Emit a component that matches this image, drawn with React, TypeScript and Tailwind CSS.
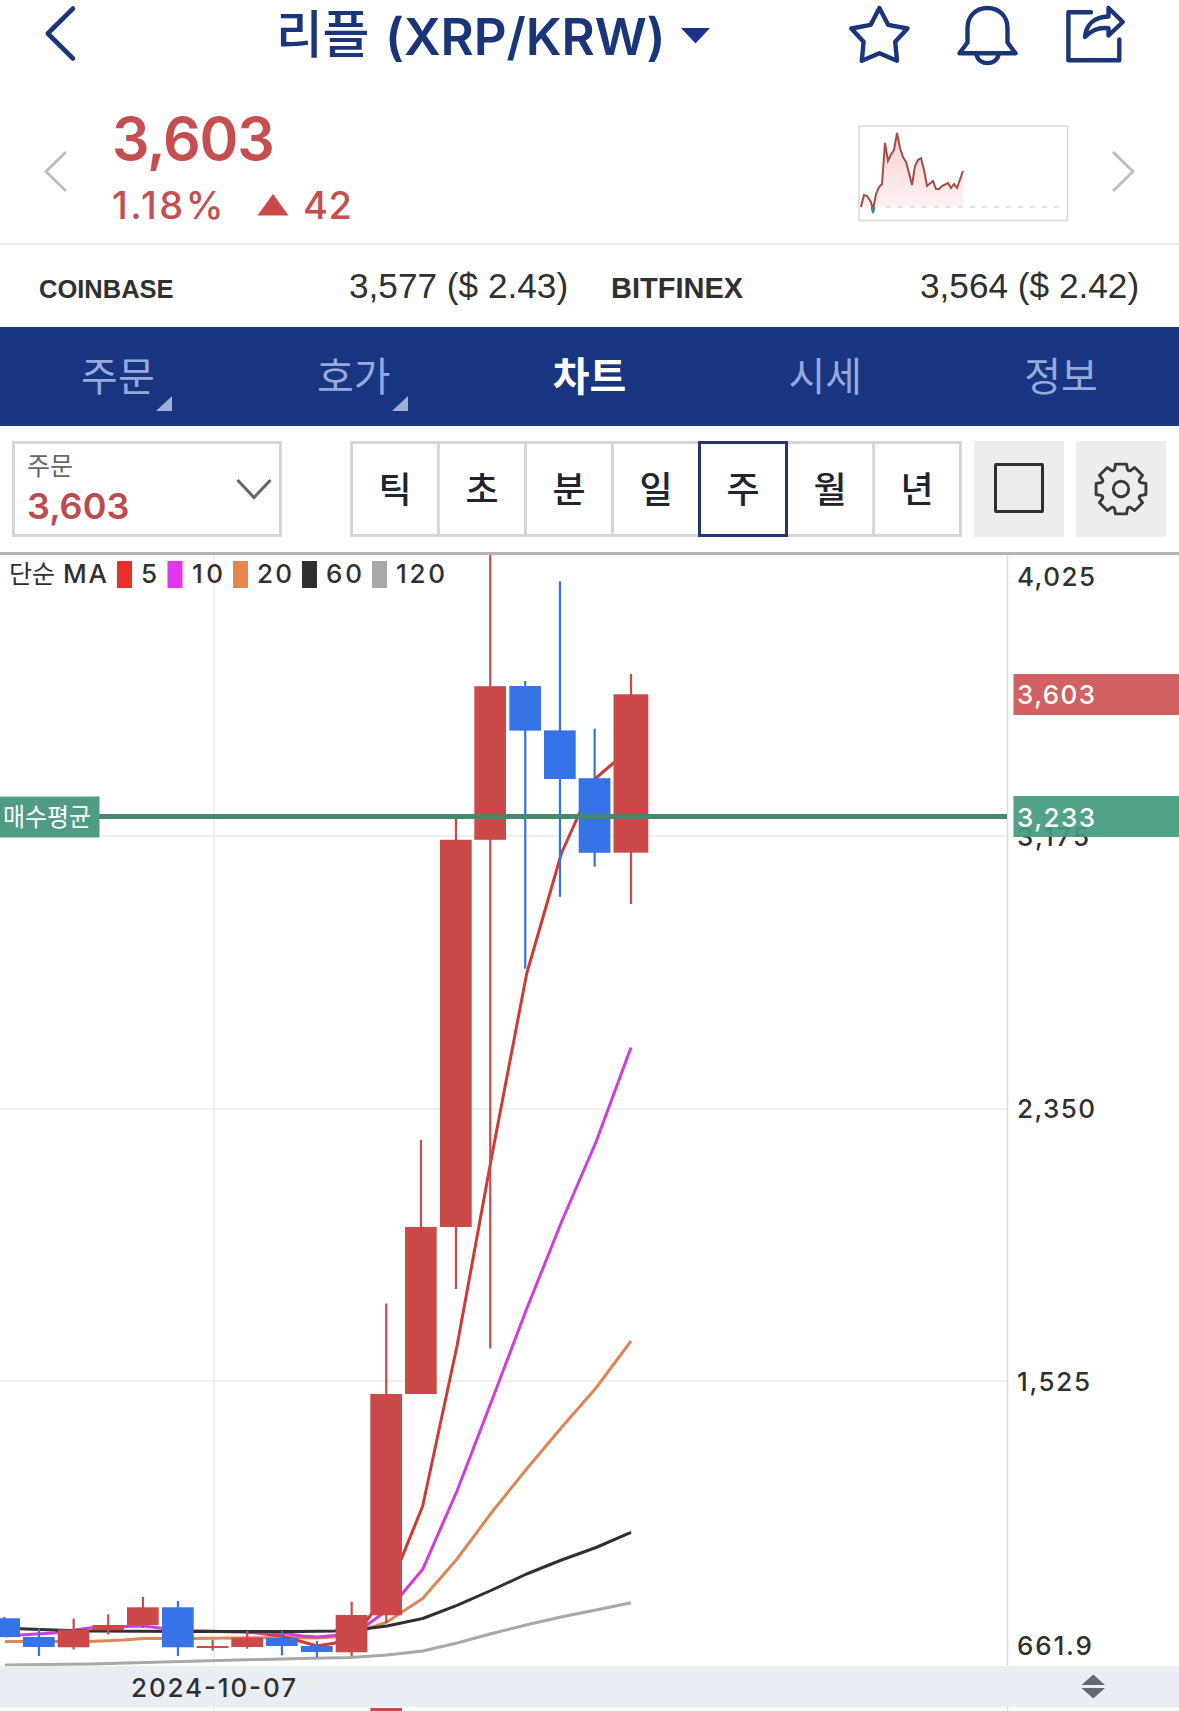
import React from "react";

type Candle = { x: number; w?: number; top: number; bottom: number; high: number; low: number; up: boolean };

const RED = "#cb4a49";
const BLUE = "#3573e6";

// Weekly candles, oldest first; x is the body's left edge.
const candles: Candle[] = [
  { x: -11.7, top: 1618.3, bottom: 1637, high: 1617, low: 1637, up: false },
  { x: 23, top: 1637, bottom: 1647, high: 1628.5, low: 1656, up: false },
  { x: 57.7, top: 1629.5, bottom: 1647.3, high: 1618.5, low: 1649.5, up: true },
  { x: 92.3, top: 1625, bottom: 1630.3, high: 1614.3, low: 1634.5, up: true },
  { x: 127, top: 1607.3, bottom: 1625, high: 1597, low: 1628, up: true },
  { x: 162, top: 1607.3, bottom: 1647.3, high: 1601, low: 1656, up: false },
  { x: 196.7, top: 1646, bottom: 1648, high: 1640, low: 1650.5, up: true },
  { x: 231.3, top: 1637.7, bottom: 1647, high: 1631, low: 1648.7, up: true },
  { x: 266, top: 1638, bottom: 1646, high: 1631, low: 1655.3, up: false },
  { x: 301, top: 1646, bottom: 1652, high: 1641, low: 1657.5, up: false },
  { x: 335.7, top: 1615, bottom: 1652.3, high: 1601.7, low: 1656, up: true },
  { x: 370.3, top: 1394, bottom: 1615.3, high: 1303.5, low: 1623, up: true },
  { x: 405, top: 1227, bottom: 1394, high: 1140, low: 1394, up: true },
  { x: 440, top: 839.8, bottom: 1227, high: 818, low: 1289, up: true },
  { x: 474.3, top: 686.2, bottom: 839.8, high: 555, low: 1348.5, up: true },
  { x: 509.3, top: 686, bottom: 730.6, high: 681, low: 968.7, up: false },
  { x: 544, top: 730.4, bottom: 779, high: 581.3, low: 896.8, up: false },
  { x: 578.7, top: 778.2, bottom: 852.8, high: 728.7, low: 866.7, up: false },
  { x: 613.5, w: 34.8, top: 694.3, bottom: 852.7, high: 674, low: 904, up: true },
];

const averages = [
  { color: "#a8a8a8", points: "5,1665 90,1664 200,1661 300,1658.5 350,1657.5 387,1655 422.7,1651 457,1643 492,1633.5 526,1625 561,1617 596,1610 631,1602.8" },
  { color: "#dd8656", points: "5,1641.5 89,1641.5 124,1640 143,1638.5 193,1638.5 282,1637.5 317,1638 334,1637 367,1629 387,1622 402,1612 422.7,1598.5 457,1559 492,1512 526.6,1469 561.5,1427.5 596,1388 631,1341" },
  { color: "#cc3b35", points: "193,1631 247,1632 282,1636 317,1646 335,1643 353,1637 367,1620 387.5,1593 401.7,1558 422.7,1506 457,1346 492,1155 526.6,974 561.5,853 580,812 596,778 614,762.5 631,748" },
  { color: "#cf3ddb", points: "5,1636 20,1635 54,1633 89,1628 124,1626.5 143,1626 160,1628 193,1631 250,1632 282,1633 302,1636 317,1637 353,1634 367,1625 387.5,1610 402,1594 422.7,1569.3 457,1491 492,1400 526.6,1309 561.5,1222 596,1142 631,1047.5" },
  { color: "#303030", points: "5,1628 20,1628.7 54,1630 89,1631 193,1631.5 300,1631.5 335,1631 367,1628.5 387,1626 422.7,1618.5 457,1605.3 492,1590 526.6,1574 561.5,1560 596,1547.5 631,1532.3" },
];

const legend = [
  { x: 117, color: "#e92f27", label: "5", tx: 141, len: 15.5 },
  { x: 167.5, color: "#e336ec", label: "10", tx: 192, len: 31 },
  { x: 233, color: "#e7864f", label: "20", tx: 257, len: 35 },
  { x: 302, color: "#303030", label: "60", tx: 326, len: 36 },
  { x: 372, color: "#a8a8a8", label: "120", tx: 396, len: 49 },
];

const FONT = "Inter, 'Noto Sans CJK KR', sans-serif";

function gearPath() {
  const p = (deg: number, r: number) => {
    const a = (deg * Math.PI) / 180;
    return `${(27 + r * Math.sin(a)).toFixed(2)} ${(27 - r * Math.cos(a)).toFixed(2)}`;
  };
  let d = "";
  for (let k = 0; k < 8; k++) {
    const a = k * 45;
    d += `${k ? "L" : "M"}${p(a - 12.5, 25.5)} L${p(a + 12.5, 25.5)} L${p(a + 17.5, 21)} Q${p(a + 22.5, 18.8)} ${p(a + 27.5, 21)} `;
  }
  return d + "Z";
}

function Header() {
  return (
    <header className="flex h-[72px] items-start text-[#1a3678]">
      <svg className="ml-[40px] mt-[2px] h-16 w-10" viewBox="40 2 40 64" fill="none" stroke="currentColor" strokeWidth="4.6" strokeLinecap="round" strokeLinejoin="round">
        <path d="M73 8.5 47.8 33.5 73 58.5" />
      </svg>
      <h1 className="ml-[196px] mt-[3px] flex h-[66px] items-center whitespace-nowrap font-[Inter,'Noto_Sans_CJK_KR',sans-serif] text-[51px] font-semibold leading-none">
        <span className="-mt-[3px] w-[109px] text-[51px] font-medium tracking-[-0.5px]">리플</span>
        <span className="w-[283px] tracking-[-0.1px]">(XRP/KRW)</span>
      </h1>
      <svg className="ml-[13px] mt-[28px] h-[16px] w-[30px]" viewBox="0 0 30 16"><path d="M0 0h29L14.5 15.5z" fill="#19348a" /></svg>
      <svg className="ml-[129px] h-[70px] w-[300px]" viewBox="840 0 300 70" fill="none" stroke="currentColor" strokeWidth="4.4" strokeLinejoin="round" strokeLinecap="round">
        <path d="M879.4 8 888.1 24.8 907.5 28.5 895.2 41.7 897 60.8 879.4 53.3 861.8 60.8 863.6 41.7 851.3 28.5 870.7 24.8Z" />
        <path d="M959.5 53.3 967.5 42.5V28C967.5 16 976 8 987.4 8S1007.5 16 1007.5 28V42.5L1015.5 53.3Z" />
        <path d="M976.5 54.5C978.5 66 996.5 66 998.5 54.5" />
        <path d="M1091 12.3H1068.4V60.3H1119.3V39.5" />
        <path d="M1085 37C1086 25 1094 17 1108.5 16.5V8L1122.8 22 1108.5 35.5V28.3C1097 27 1091 31 1085 37Z" />
      </svg>
    </header>
  );
}

function PriceSummary() {
  return (
    <section className="flex h-[173px] border-b-2 border-[#e6e6e6] font-[Inter,sans-serif] text-[#c44e50]">
      <svg className="ml-[42px] mt-[78px] h-[44px] w-[28px]" viewBox="42 150 28 44" fill="none" stroke="#bdbdbd" strokeWidth="2.8"><path d="M66 152 46 171.500 66 191" /></svg>
      <div className="ml-[42px] w-[300px]">
        <div className="mt-[37px] h-[60px] text-[59px] font-semibold leading-[60px] tracking-[-1.2px]">3,603</div>
        <div className="mt-[17px] flex h-[38px] items-center whitespace-nowrap text-[38px] leading-[38px]">
          <span className="w-[145px] font-medium tracking-[2.5px]">1.18%</span>
          <svg className="h-[22px] w-[32px]" viewBox="0 0 32 22"><path d="M16 0 31.500 21.500H.5z" fill="#cb4a49" /></svg>
          <span className="ml-[14px] font-medium tracking-[0.5px]">42</span>
        </div>
      </div>
      <svg className="ml-[446px] mt-[53px] h-[97px] w-[211px]" viewBox="858 125 211 97" fill="none">
        <defs>
          <linearGradient id="fade" x1="0" y1="0" x2="0" y2="1">
            <stop offset="0" stopColor="#f9cfd2" />
            <stop offset="1" stopColor="#fff4f4" />
          </linearGradient>
        </defs>
        <rect x="859" y="126" width="208.500" height="94.500" stroke="#dcdcdc" strokeWidth="1.6" />
        <path d="M861 207 864 195 867 196 871 202 873 210 876 194 879 187 882 184 885 143 888 161 891 154.500 894 150 897 133 900 148 903 157 906 162 909 173 912 185 915 166 918 160 921 158 924 170 927 186 933 181 936 189 939 189 942 186 948 183 951 188 954 184 957 188 963 171V207Z" fill="url(#fade)" />
        <path d="M886 207H1060" stroke="#d6d6d6" strokeWidth="1.600" strokeDasharray="5 7" />
        <path d="M861 207 864 195 867 196 871 202 873 210 876 194 879 187 882 184 885 143 888 161 891 154.500 894 150 897 133 900 148 903 157 906 162 909 173 912 185 915 166 918 160 921 158 924 170 927 186 933 181 936 189 939 189 942 186 948 183 951 188 954 184 957 188 963 171" stroke="#a54b45" strokeWidth="2" />
        <path d="M871.500 207 873 213 874.500 207" stroke="#477fa8" strokeWidth="2" />
      </svg>
      <svg className="ml-[41px] mt-[78px] h-[44px] w-[28px]" viewBox="1110 150 28 44" fill="none" stroke="#bdbdbd" strokeWidth="2.8"><path d="M1113 152 1133 171.500 1113 191" /></svg>
    </section>
  );
}

function Exchanges() {
  return (
    <section className="flex h-[82px] items-baseline whitespace-nowrap font-['Liberation_Sans',sans-serif] text-[#303030]">
      <span className="w-[311px] pl-[39px] text-[25.5px] font-bold leading-[82px]">COINBASE</span>
      <span className="w-[258px] pl-[38px] text-[35.2px] leading-[82px]">3,577 ($ 2.43)</span>
      <span className="w-[300px] pl-[42px] text-[29px] font-bold leading-[82px]">BITFINEX</span>
      <span className="pl-[51px] text-[35.2px] leading-[82px]">3,564 ($ 2.42)</span>
    </section>
  );
}

const tabs = [
  { label: "주문", menu: true },
  { label: "호가", menu: true },
  { label: "차트", active: true },
  { label: "시세" },
  { label: "정보" },
];

function Tabs() {
  return (
    <nav className="grid h-[99px] grid-cols-5 border-y border-[#1c3872] bg-[#18357f] font-['Noto_Sans_CJK_KR',sans-serif] text-[40px] leading-none">
      {tabs.map((t) => (
        <div key={t.label} className="relative flex items-center justify-center pb-[5px]">
          <span className={t.active ? "font-bold text-white" : "font-normal text-[#96a8dc]"}>{t.label}</span>
          {t.menu && (
            <svg className="absolute bottom-[14px] left-[156px] h-[15px] w-[16px]" viewBox="0 0 16 15"><path d="M16 0V15H0z" fill="#a2afda" /></svg>
          )}
        </div>
      ))}
    </nav>
  );
}

const periods = [
  { label: "틱", cell: "w-[87px] border-r-[3px] border-[#d6d6d6]" },
  { label: "초", cell: "w-[87px] border-r-[3px] border-[#d6d6d6]" },
  { label: "분", cell: "w-[87px] border-r-[3px] border-[#d6d6d6]" },
  { label: "일", cell: "w-[87px] pr-[3px]" },
  { label: "주", cell: "relative -my-[3px] -ml-[3px] w-[90px] border-[3px] border-[#22376d]" },
  { label: "월", cell: "w-[87px] border-r-[3px] border-[#d6d6d6]" },
  { label: "년", cell: "w-[84px]" },
];

function Toolbar() {
  return (
    <section className="flex h-[129px] items-start border-b-[3px] border-[#b5b5b5] pl-[12px] pt-[15px]">
      <div className="flex h-24 w-[270px] items-center justify-between border-[3px] border-[#d6d6d6] pl-[12px] pr-[7px]">
        <div className="-mt-[4px]">
          <div className="h-[34px] font-['Noto_Sans_CJK_KR',sans-serif] text-[25px] leading-[34px] text-[#666]">주문</div>
          <div className="mt-[4px] h-[42px] font-[Inter,sans-serif] text-[36px] font-semibold leading-[42px] text-[#b94c50]">3,603</div>
        </div>
        <svg className="-mt-[1px] h-6 w-9" viewBox="0 0 36 24" fill="none" stroke="#666" strokeWidth="3"><path d="M1.500 3 18 20.500 34.500 3" /></svg>
      </div>
      <div className="ml-[68px] flex h-24 w-[612px] border-[3px] border-[#d6d6d6] font-['Noto_Sans_CJK_KR',sans-serif] text-[36px] font-medium leading-none text-[#20242f]">
        {periods.map((p) => (
          <div key={p.label} className={`flex shrink-0 items-center justify-center pb-[4px] ${p.cell}`}>
            {p.label}
          </div>
        ))}
      </div>
      <div className="ml-[12px] flex h-24 w-[90px] items-center justify-center bg-[#ededed]">
        <div className="-mt-[2px] h-[50px] w-[50px] rounded-[2px] border-[3px] border-[#303030]" />
      </div>
      <div className="ml-[12px] flex h-24 w-[90px] items-center justify-center bg-[#ededed]">
        <svg className="-mt-[1px] h-[54px] w-[54px]" viewBox="0 0 54 54" fill="none" stroke="#3a3a3a" strokeWidth="2.9" strokeLinejoin="round">
          <path d={gearPath()} />
          <circle cx="27" cy="27" r="7.7" />
        </svg>
      </div>
    </section>
  );
}

function Chart() {
  const axis = [
    { y: 585.5, label: "4,025", len: 78 },
    { y: 845.5, label: "3,175", len: 72 },
    { y: 1118, label: "2,350", len: 78 },
    { y: 1391, label: "1,525", len: 73 },
    { y: 1655, label: "661.9", len: 75 },
  ];
  return (
    <svg className="block h-[1156px] w-[1179px]" viewBox="0 555 1179 1156" fontFamily={FONT} fontSize="26" fontWeight="550" fill="#303030">
      <g stroke="#ececec" strokeWidth="1.5">
        <path d="M0 836H1007M0 1109H1007M0 1381H1007M214 555V1711" />
        <path d="M1007.500 555V1711" stroke="#dcdcdc" strokeWidth="1.500" />
      </g>
      <text x="9" y="583" fontSize="25.500" fontWeight="400" textLength="46" lengthAdjust="spacingAndGlyphs">단순</text>
      <text x="63" y="583" textLength="44" fontWeight="500">MA</text>
      {legend.map((l) => (
        <g key={l.label}>
          <rect x={l.x} y="561" width="15" height="27" fill={l.color} />
          <text x={l.tx} y="583" textLength={l.len}>{l.label}</text>
        </g>
      ))}
      {averages.map((a) => (
        <polyline key={a.color} points={a.points} fill="none" stroke={a.color} strokeWidth="3" strokeLinejoin="round" />
      ))}
      {candles.map((c) => {
        const w = c.w ?? 31.7;
        return (
          <g key={c.x} fill={c.up ? RED : BLUE}>
            <rect x={c.x + w / 2 - 1} y={c.high} width="2.200" height={c.low - c.high} />
            <rect x={c.x} y={c.top} width={w} height={c.bottom - c.top} />
          </g>
        );
      })}
      <path d="M99 816.600H1007" stroke="#46896d" strokeWidth="5" />
      <rect y="796.500" width="99.500" height="41" fill="#4f9b83" />
      <text x="3" y="826" fontSize="25" fontWeight="400" fill="#fff" textLength="88" lengthAdjust="spacingAndGlyphs">매수평균</text>
      {axis.map((a) => (
        <text key={a.label} x="1017" y={a.y} textLength={a.len}>{a.label}</text>
      ))}
      <rect x="1013.500" y="674" width="166" height="41" fill="#d26163" />
      <rect x="1013.500" y="796" width="166" height="41" fill="#459a80" fillOpacity="0.93" />
      <text x="1017" y="704" fill="#fff" textLength="78">3,603</text>
      <text x="1017" y="827" fill="#fff" textLength="78">3,233</text>
      <rect y="1666" width="1179" height="41" fill="#e9edf4" />
      <text x="131" y="1697" textLength="165">2024-10-07</text>
      <path d="M1093.300 1674.500 1105 1685H1081.500ZM1081.500 1688H1105L1093.300 1698.500Z" fill="#666970" />
      <rect x="370.300" y="1708" width="31.700" height="3" fill={RED} />
    </svg>
  );
}

export default function App() {
  return (
    <main className="w-[1179px] overflow-hidden bg-white">
      <Header />
      <PriceSummary />
      <Exchanges />
      <Tabs />
      <Toolbar />
      <Chart />
    </main>
  );
}
